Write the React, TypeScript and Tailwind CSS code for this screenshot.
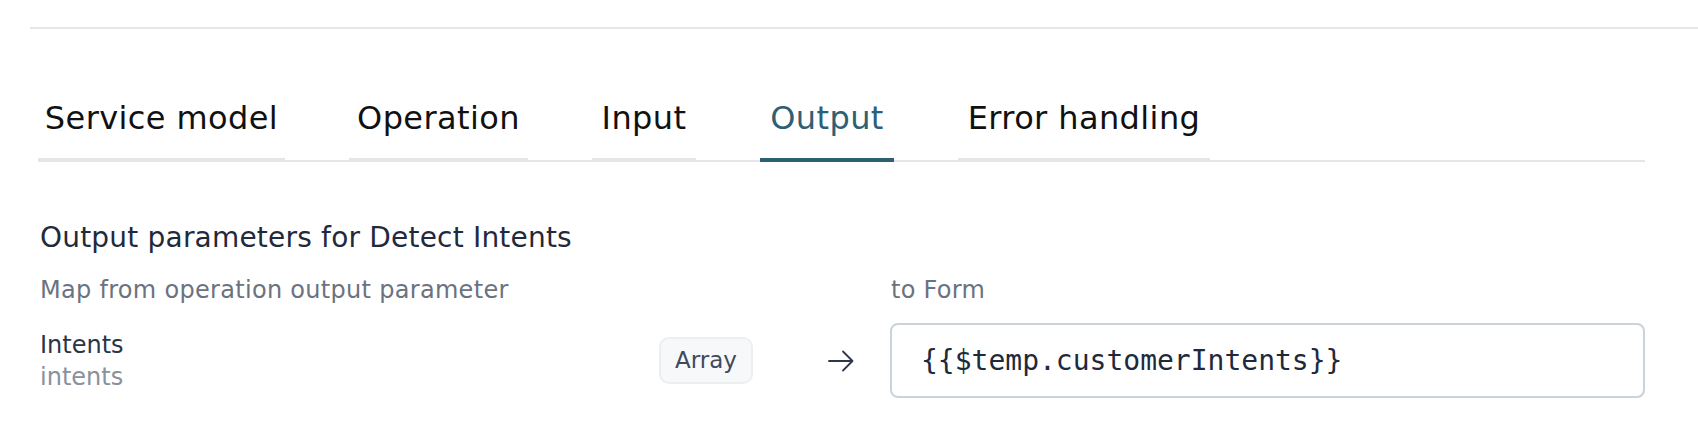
import React from "react";

const tabs = [
  { label: "Service model", w: "w-[247px]", active: false },
  { label: "Operation", w: "w-[179px]", active: false },
  { label: "Input", w: "w-[104px]", active: false },
  { label: "Output", w: "w-[134px]", active: true },
  { label: "Error handling", w: "w-[252px]", active: false },
];

export default function App() {
  return (
    <div
      className="w-[1698px] h-[428px] bg-white overflow-hidden"
      style={{ fontFamily: "'DejaVu Sans', Inter, sans-serif" }}
    >
      <div className="pt-[27px] pl-[30px]">
        <div className="h-[2px] bg-[#e6e6e6]" />
      </div>

      <div className="pl-[38px] pr-[53px]">
        {/* Tabs */}
        <div className="mt-[69px] flex gap-[64px] border-b-2 border-[#e4e4e9]">
          {tabs.map((t) => (
            <div
              key={t.label}
              className={`${t.w} -mb-[2px] pb-[20px] text-center text-[32px] leading-[40px] tracking-[0.4px] whitespace-nowrap border-b-4 ${
                t.active
                  ? "border-[#2d6075] text-[#2d6075]"
                  : "border-[#e4e4e9] text-[#111111]"
              }`}
            >
              {t.label}
            </div>
          ))}
        </div>

        <div className="pl-[2px]">
          {/* Heading */}
          <div className="mt-[58px] text-[28px] leading-[36px] text-[#1f2a3c] tracking-[0.2px]">
            Output parameters for Detect Intents
          </div>

          {/* Column headers */}
          <div className="mt-[18px] flex text-[24px] leading-[32px] text-[#6b7280] tracking-[0.3px]">
            <div className="flex-1">Map from operation output parameter</div>
            <div className="w-[754px]">to Form</div>
          </div>

          {/* Row */}
          <div className="mt-[17px] flex items-center h-[75px]">
            <div className="w-[619px] text-[24px] leading-[32px]">
              <div className="text-[#2a3547]">Intents</div>
              <div className="text-[#8a909c]">intents</div>
            </div>
            <div className="w-[94px] h-[47px] rounded-[10px] border-2 border-[#eceef1] bg-[#f7f8fa] flex items-center justify-center text-[23px] text-[#3f4a5a]">
              Array
            </div>
            <div className="ml-[75px] w-[26px] flex items-center">
              <svg width="26" height="22" viewBox="0 0 26 22" fill="none">
                <path
                  d="M1 11H24.5M15 1.5L24.5 11L15 20.5"
                  stroke="#2d3748"
                  strokeWidth="1.8"
                  strokeLinecap="round"
                  strokeLinejoin="round"
                />
              </svg>
            </div>
            <div
              className="ml-[36px] flex-1 h-[75px] rounded-[8px] border-2 border-[#c9d3d9] flex items-center pl-[29px] text-[28px] text-[#1e2a3b]"
              style={{ fontFamily: "'DejaVu Sans Mono', monospace" }}
            >
              {"{{$temp.customerIntents}}"}
            </div>
          </div>
        </div>
      </div>
    </div>
  );
}
